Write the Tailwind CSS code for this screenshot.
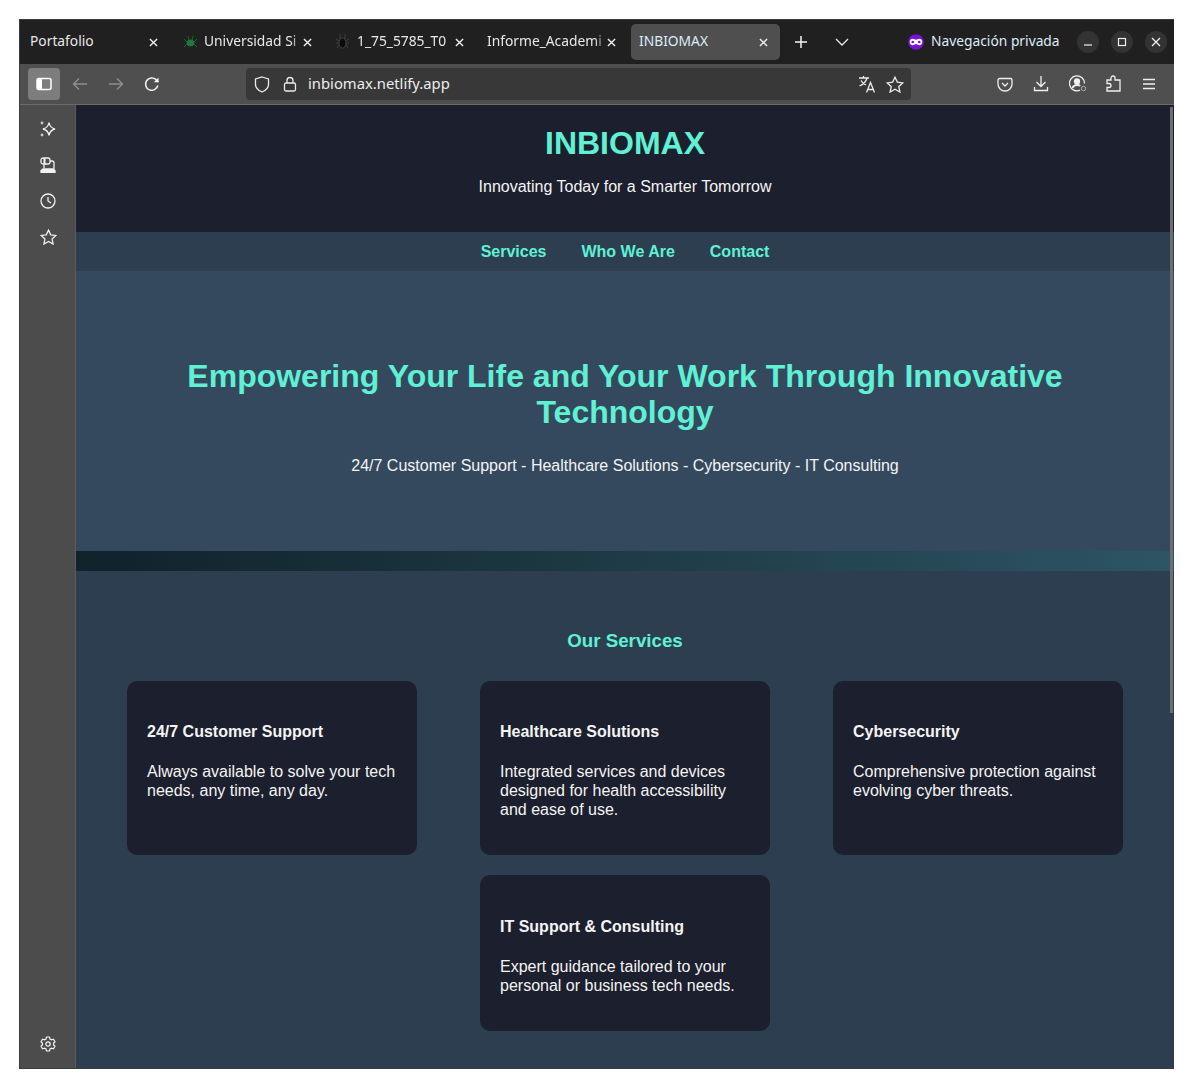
<!DOCTYPE html>
<html lang="en">
<head>
  <meta charset="UTF-8">
  <meta name="viewport" content="width=device-width, initial-scale=1.0">
  <title>INBIOMAX</title>
  <script src="https://cdn.jsdelivr.net/npm/@tailwindcss/browser@4"></script>
</head>
<body class="bg-white overflow-hidden">
  <div class="ml-[19px] mt-[19px] w-[1155px] h-[1050px] border border-r-0 border-[#3c3c3c] flex flex-col overflow-hidden font-['Noto_Sans',sans-serif]">

    <!-- tab strip -->
    <div class="h-[44px] shrink-0 bg-[#202020] flex items-center text-[13.800px] text-[#e8e8e8]">
      <div class="flex gap-[3px] ml-[3px]">
        <div class="w-[149px] h-[36px] rounded-[5px] flex items-center pl-[7px] pr-[14px]">
          <span class="flex-1 whitespace-nowrap pb-[1px]">Portafolio</span>
          <svg class="w-[9px] h-[9px] shrink-0" viewBox="0 0 10 10" fill="none" stroke="#f0f0f0" stroke-width="1.500"><path d="M1 1l8 8M9 1l-8 8"/></svg>
        </div>
        <div class="w-[149px] h-[36px] rounded-[5px] flex items-center pl-[8px] pr-[12px]">
          <svg class="w-[15px] h-[14px] mr-[6px] shrink-0" viewBox="0 0 15 14" fill="#1f7a3d" stroke="#1f7a3d" stroke-width="0.800"><ellipse cx="7.500" cy="8" rx="3.500" ry="3"/><path d="M5 1l1 4M10 1L9 5M1 4l3 3M14 4l-3 3M1 12l3-3M14 12l-3-3" fill="none"/></svg>
          <span class="flex-1 whitespace-nowrap pb-[1px] [mask-image:linear-gradient(to_right,black_88%,transparent)]">Universidad Si</span>
          <svg class="w-[9px] h-[9px] shrink-0" viewBox="0 0 10 10" fill="none" stroke="#f0f0f0" stroke-width="1.500"><path d="M1 1l8 8M9 1l-8 8"/></svg>
        </div>
        <div class="w-[149px] h-[36px] rounded-[5px] flex items-center pl-[8px] pr-[12px]">
          <svg class="w-[15px] h-[16px] mr-[7px] shrink-0" viewBox="0 0 15 16" fill="#0c0c0c" stroke="#4a4a4a" stroke-width="0.800"><ellipse cx="7.500" cy="9" rx="3.500" ry="5"/><path d="M5 0v5M10 0v5M1 5l3 2M14 5l-3 2M1 9h3M14 9h-3M2 14l2-3M13 14l-2-3" fill="none"/></svg>
          <span class="flex-1 whitespace-nowrap pb-[1px] [mask-image:linear-gradient(to_right,black_90%,transparent)]">1_75_5785_T0</span>
          <svg class="w-[9px] h-[9px] shrink-0" viewBox="0 0 10 10" fill="none" stroke="#f0f0f0" stroke-width="1.500"><path d="M1 1l8 8M9 1l-8 8"/></svg>
        </div>
        <div class="w-[149px] h-[36px] rounded-[5px] flex items-center pl-[8px] pr-[12px]">
          <span class="flex-1 whitespace-nowrap pb-[1px] [mask-image:linear-gradient(to_right,black_90%,transparent)]">Informe_Academi</span>
          <svg class="w-[9px] h-[9px] shrink-0" viewBox="0 0 10 10" fill="none" stroke="#f0f0f0" stroke-width="1.500"><path d="M1 1l8 8M9 1l-8 8"/></svg>
        </div>
        <div class="w-[149px] h-[36px] rounded-[5px] flex items-center pl-[8px] pr-[12px] bg-[#4f4f4f] text-[#dcecfa]">
          <span class="flex-1 whitespace-nowrap pb-[1px]">INBIOMAX</span>
          <svg class="w-[9px] h-[9px] shrink-0" viewBox="0 0 10 10" fill="none" stroke="#f0f0f0" stroke-width="1.500"><path d="M1 1l8 8M9 1l-8 8"/></svg>
        </div>
      </div>
      <svg class="w-[14px] h-[14px] ml-[14px]" viewBox="0 0 14 14" fill="none" stroke="#f5f5f5" stroke-width="1.500"><path d="M7 1v12M1 7h12"/></svg>
      <svg class="w-[14px] h-[8px] ml-[27px]" viewBox="0 0 14 8" fill="none" stroke="#e8e8e8" stroke-width="1.300"><path d="M1 1l6 6 6-6"/></svg>
      <svg class="w-[16px] h-[16px] ml-[59px]" viewBox="0 0 16 16"><circle cx="8" cy="8" r="7.800" fill="#7a0fd6"/><path d="M4.500 4.800c1.500 0 2.500 1 3.500 1s2-1 3.500-1c1.800 0 2.800 1.400 2.800 3.200 0 2-1.200 3.200-2.800 3.200-1.500 0-2.500-1.200-3.500-1.200s-2 1.200-3.500 1.200C2.900 11.200 1.700 10 1.700 8c0-1.800 1-3.200 2.800-3.200z" fill="#fff"/><circle cx="4.800" cy="8" r="1.300" fill="#7a0fd6"/><circle cx="11.200" cy="8" r="1.300" fill="#7a0fd6"/></svg>
      <span class="ml-[7px] whitespace-nowrap pb-[1px] text-[#dcecfa]">Navegación privada</span>
      <div class="ml-auto flex gap-[12px] mr-[7px]">
        <div class="w-[22px] h-[22px] rounded-full bg-[#333] flex items-center justify-center"><svg class="w-[10px] h-[10px]" viewBox="0 0 10 10" stroke="#eee" stroke-width="1.200"><path d="M1 8h8"/></svg></div>
        <div class="w-[22px] h-[22px] rounded-full bg-[#333] flex items-center justify-center"><svg class="w-[10px] h-[10px]" viewBox="0 0 10 10" fill="none" stroke="#eee" stroke-width="1.200"><rect x="1.500" y="1.500" width="7" height="7"/></svg></div>
        <div class="w-[22px] h-[22px] rounded-full bg-[#333] flex items-center justify-center"><svg class="w-[10px] h-[10px]" viewBox="0 0 10 10" fill="none" stroke="#eee" stroke-width="1.300"><path d="M1 1l8 8M9 1l-8 8"/></svg></div>
      </div>
    </div>

    <!-- toolbar -->
    <div class="h-[41px] shrink-0 bg-[#4f4f4f] border-b border-[#6a6a6a] flex items-start pt-[4px]">
      <div class="ml-[8px] w-[32px] h-[32px] rounded-[4px] bg-[#7d7d7d] flex items-center justify-center">
        <svg class="w-[16px] h-[14px]" viewBox="0 0 16 14" fill="none"><rect x="1" y="1.500" width="14" height="11" rx="2" stroke="#fff" stroke-width="1.500"/><rect x="1" y="1.500" width="5" height="11" rx="1" fill="#fff"/></svg>
      </div>
      <svg class="w-[16px] h-[14px] ml-[12px] mt-[9px]" viewBox="0 0 16 14" fill="none" stroke="#8f8f8f" stroke-width="1.400"><path d="M15 7H1.500M7 1.500L1.500 7 7 12.500"/></svg>
      <svg class="w-[16px] h-[14px] ml-[20px] mt-[9px]" viewBox="0 0 16 14" fill="none" stroke="#8f8f8f" stroke-width="1.400"><path d="M1 7h13.500M9 1.500L14.500 7 9 12.500"/></svg>
      <svg class="w-[16px] h-[16px] ml-[20px] mt-[8px]" viewBox="0 0 16 16" fill="none" stroke="#f2f2f2" stroke-width="1.500"><path d="M13.800 9.500A6.200 6.200 0 1 1 12 3.600L14.500 6"/><path d="M14.500 1.500V6.200H9.800" fill="#f2f2f2" stroke="none"/></svg>
      <div class="ml-[86px] w-[665px] h-[32px] rounded-[4px] bg-[#383838] flex items-center text-[14.800px] text-[#ececec]">
        <svg class="w-[16px] h-[17px] ml-[8px]" viewBox="0 0 16 17" fill="none" stroke="#ececec" stroke-width="1.300"><path d="M8 1l6.500 2v5.500c0 3.800-3.200 6-6.500 7.500-3.300-1.500-6.500-3.700-6.500-7.500V3z"/></svg>
        <svg class="w-[14px] h-[16px] ml-[13px]" viewBox="0 0 14 16" fill="none" stroke="#ececec" stroke-width="1.300"><rect x="1.500" y="7" width="11" height="8" rx="1.500"/><path d="M4 7V4.500a3 3 0 0 1 6 0V7"/></svg>
        <span class="ml-[11px] flex-1 pb-[2px]">inbiomax.netlify.app</span>
        <svg class="w-[18px] h-[18px]" viewBox="0 0 18 18" fill="none" stroke="#ececec" stroke-width="1.300"><path d="M1 3h10M5.500 1v2M9 3C8 6.500 5.500 9.500 1.500 11M3 5.500c1 2 2.700 3.500 5 4.500M8.500 17.500l4-10 4 10M9.800 14.500h5.400"/></svg>
        <svg class="w-[18px] h-[17px] ml-[10px] mr-[7px]" viewBox="0 0 18 17" fill="none" stroke="#ececec" stroke-width="1.300"><path d="M9 1.200l2.400 5 5.400.7-4 3.700 1.100 5.400L9 13.300 4.100 16l1.100-5.400-4-3.700 5.400-.7z"/></svg>
      </div>
      <svg class="w-[16px] h-[15px] ml-[86px] mt-[9px]" viewBox="0 0 16 15" fill="none" stroke="#f0f0f0" stroke-width="1.300"><path d="M2.500 1.500h11a1.500 1.500 0 0 1 1.500 1.500v4a7 7 0 0 1-14 0V3a1.500 1.500 0 0 1 1.500-1.500z"/><path d="M5 6l3 3 3-3"/></svg>
      <svg class="w-[16px] h-[17px] ml-[20px] mt-[7px]" viewBox="0 0 16 17" fill="none" stroke="#f0f0f0" stroke-width="1.300"><path d="M8 1v10M3.500 7L8 11.500 12.500 7M1.500 12v3.500h13V12"/></svg>
      <svg class="w-[18px] h-[17px] ml-[20px] mt-[7px]" viewBox="0 0 18 17" fill="none" stroke="#f0f0f0" stroke-width="1.300"><path d="M11 15.200A7.500 7.500 0 1 1 15.500 8.500"/><circle cx="8" cy="6.500" r="2.500" fill="#f0f0f0"/><path d="M3.500 13c1-2.500 2.500-3 4.500-3s2.500.3 3 1" stroke-width="2"/><circle cx="14.500" cy="13.500" r="2.200" stroke="#b0b0b0" stroke-width="1"/></svg>
      <svg class="w-[15px] h-[17px] ml-[19px] mt-[7px]" viewBox="0 0 15 17" fill="none" stroke="#f0f0f0" stroke-width="1.300"><path d="M1 5h4V3a2 2 0 0 1 4 0v2h5v11H1v-3.500h2a2 2 0 0 0 0-4H1z"/></svg>
      <svg class="w-[14px] h-[12px] ml-[21px] mt-[10px]" viewBox="0 0 14 12" stroke="#f0f0f0" stroke-width="1.300"><path d="M1 1.500h12M1 6h12M1 10.500h12"/></svg>
    </div>

    <div class="flex-1 flex min-h-0">
      <!-- sidebar -->
      <aside class="w-[56px] shrink-0 bg-[#4c4c4c] border-r border-[#5c5c5c] flex flex-col items-center pl-[1px] pt-[16px] pb-[16px]">
        <svg class="w-[16px] h-[16px]" viewBox="0 0 16 16" fill="none" stroke="#f2f2f2" stroke-width="1.300"><path d="M9 1.500c.7 4 2 5.600 6 6.500-4 .9-5.300 2.500-6 6.500-.7-4-2-5.600-6-6.500 4-.9 5.300-2.500 6-6.500z"/><circle cx="2" cy="2" r="1.400" fill="#c8c8c8" stroke="none"/><circle cx="2" cy="14" r="1.400" fill="#c8c8c8" stroke="none"/></svg>
        <svg class="w-[16px] h-[16px] mt-[20px]" viewBox="0 0 16 16" fill="none" stroke="#f2f2f2" stroke-width="1.300"><rect x="1" y="1" width="9" height="6" rx="2"/><path d="M4.500 1v6" stroke-width="2"/><path d="M10 4h2a2 2 0 0 1 2 2v6M4 7v4"/><path d="M1 15.500v-2l2-1.500h10l2 1.500v2z" fill="#f2f2f2"/></svg>
        <svg class="w-[16px] h-[16px] mt-[20px]" viewBox="0 0 16 16" fill="none" stroke="#f2f2f2" stroke-width="1.300"><circle cx="8" cy="8" r="7"/><path d="M8 4v4l3 2"/></svg>
        <svg class="w-[17px] h-[16px] mt-[20px]" viewBox="0 0 18 17" fill="none" stroke="#f2f2f2" stroke-width="1.300"><path d="M9 1.200l2.400 5 5.400.7-4 3.700 1.100 5.400L9 13.300 4.100 16l1.100-5.400-4-3.700 5.400-.7z"/></svg>
        <svg class="w-[16px] h-[16px] mt-auto" viewBox="0 0 16 16" fill="none" stroke="#f2f2f2" stroke-width="1.200"><path d="M6.500 1h3l.5 2 1.500.8 2-.6 1.500 2.600-1.500 1.400v1.600l1.500 1.400-1.500 2.600-2-.6-1.500.8-.5 2h-3l-.5-2-1.500-.8-2 .6L1 10.200l1.500-1.400V7.200L1 5.800l1.500-2.600 2 .6L6 3z"/><circle cx="8" cy="8" r="2.200"/></svg>
      </aside>

      <!-- page -->
      <main class="relative flex-1 min-w-0 overflow-hidden bg-[#2c3e50] font-['Liberation_Sans',Arial,sans-serif] text-[#f4f4f4] text-[16px] leading-[19px] text-center">
        <div class="absolute right-[1px] top-[2px] w-[3px] h-[606px] bg-[#6e6e6e]"></div>
        <header class="h-[127px] bg-[#1c1f2d] pt-[20px]">
          <h1 class="text-[32px] leading-[37px] font-bold text-[#60f0d4]">INBIOMAX</h1>
          <p class="mt-[15px]">Innovating Today for a Smarter Tomorrow</p>
        </header>
        <nav class="h-[39px] bg-[#2c3e50] flex items-center justify-center gap-[35px] font-bold text-[#60f0d4]">
          <a href="#">Services</a>
          <a href="#">Who We Are</a>
          <a href="#">Contact</a>
        </nav>
        <section class="h-[280px] bg-[#34495e] pt-[87px] px-[100px]">
          <h2 class="text-[32px] leading-[36px] font-bold text-[#60f0d4]">Empowering Your Life and Your Work Through Innovative Technology</h2>
          <p class="mt-[26px]">24/7 Customer Support - Healthcare Solutions - Cybersecurity - IT Consulting</p>
        </section>
        <div class="h-[20px] bg-gradient-to-r from-[#10222a] to-[#2d5564]"></div>
        <section class="pt-[59px]">
          <h2 class="text-[18.720px] leading-[22px] font-bold text-[#60f0d4]">Our Services</h2>
          <div class="mt-[29px] grid grid-cols-[290px_290px_290px] justify-center gap-x-[63px] gap-y-[20px] text-left">
            <div class="h-[174px] rounded-[10px] bg-[#1c1f2d] px-[20px] pt-[42px]">
              <h3 class="font-bold leading-[18px]">24/7 Customer Support</h3>
              <p class="mt-[21px]">Always available to solve your tech needs, any time, any day.</p>
            </div>
            <div class="h-[174px] rounded-[10px] bg-[#1c1f2d] px-[20px] pt-[42px]">
              <h3 class="font-bold leading-[18px]">Healthcare Solutions</h3>
              <p class="mt-[21px]">Integrated services and devices designed for health accessibility and ease of use.</p>
            </div>
            <div class="h-[174px] rounded-[10px] bg-[#1c1f2d] px-[20px] pt-[42px]">
              <h3 class="font-bold leading-[18px]">Cybersecurity</h3>
              <p class="mt-[21px]">Comprehensive protection against evolving cyber threats.</p>
            </div>
            <div class="col-start-2 h-[156px] rounded-[10px] bg-[#1c1f2d] px-[20px] pt-[43px]">
              <h3 class="font-bold leading-[18px]">IT Support &amp; Consulting</h3>
              <p class="mt-[21px]">Expert guidance tailored to your personal or business tech needs.</p>
            </div>
          </div>
        </section>
      </main>
    </div>
  </div>
</body>
</html>
